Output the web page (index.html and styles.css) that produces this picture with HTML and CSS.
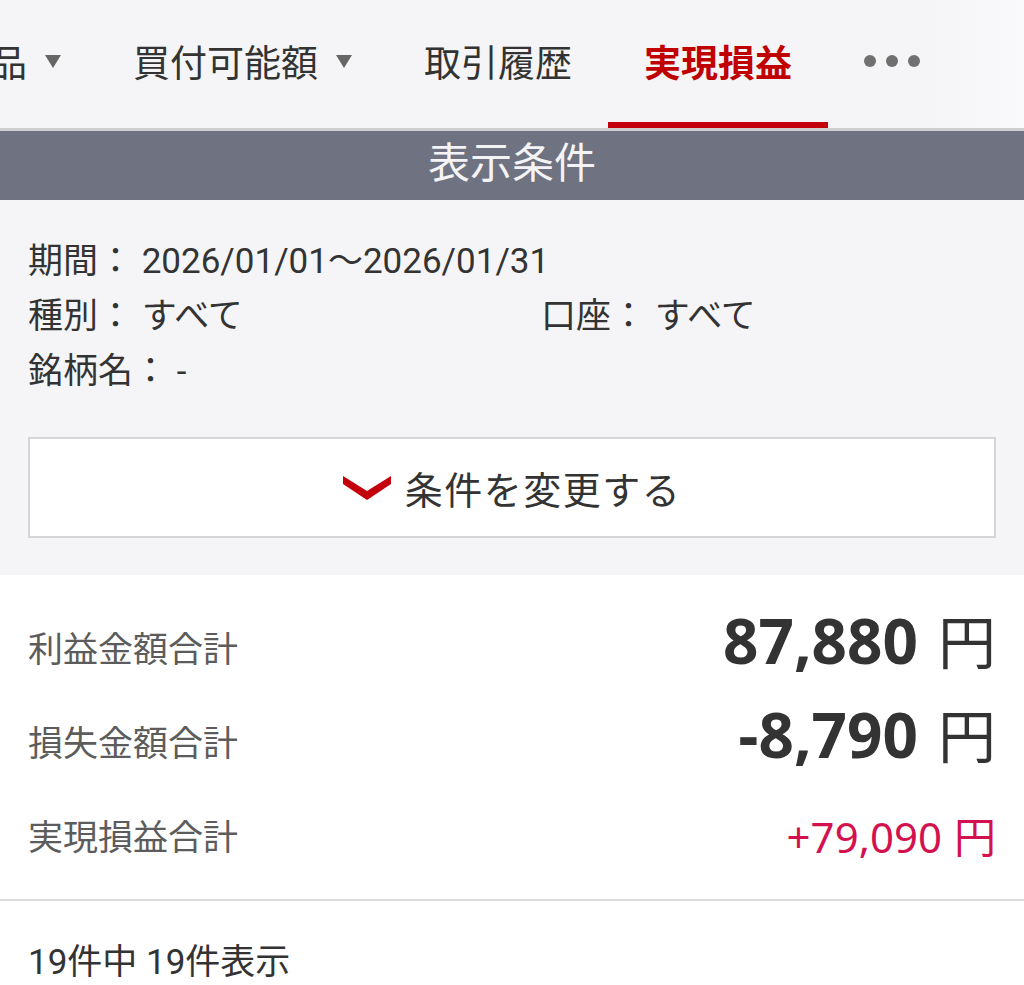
FILE: index.html
```html
<!DOCTYPE html>
<html lang="ja">
<head>
    <meta charset="UTF-8">
    <meta name="viewport" content="width=device-width, initial-scale=1.0">
    <title>実現損益</title>
    <link rel="stylesheet" href="styles.css">
</head>
<body>
    <!-- タブ -->
    <nav class="tabs">
        <div class="tab tab-first">品<span class="caret"></span></div>
        <div class="tab">買付可能額<span class="caret"></span></div>
        <div class="tab">取引履歴</div>
        <div class="tab active">実現損益</div>
        <div class="tab more"><span class="dot"></span><span class="dot"></span><span class="dot"></span></div>
        <div class="fade"></div>
    </nav>

    <div class="section-title">表示条件</div>

    <!-- 表示条件 -->
    <section class="conditions">
        <div class="cond-grid">
            <div class="cond full">期間： 2026/01/01～2026/01/31</div>
            <div class="cond">種別： すべて</div>
            <div class="cond">口座： すべて</div>
            <div class="cond full">銘柄名： -</div>
        </div>
        <button class="change-btn" type="button">
            <svg class="chevron" width="48" height="24" viewBox="0 0 48 24">
                <polygon points="0,0 24,15 48,0 48,8 24,24 0,8" fill="#c4000c"/>
            </svg>
            <span>条件を変更する</span>
        </button>
    </section>

    <!-- 合計 -->
    <section class="summary">
        <div class="sum-row">
            <span class="sum-label">利益金額合計</span>
            <span class="sum-value big">87,880<span class="yen">円</span></span>
        </div>
        <div class="sum-row">
            <span class="sum-label">損失金額合計</span>
            <span class="sum-value big">-8,790<span class="yen">円</span></span>
        </div>
        <div class="sum-row">
            <span class="sum-label">実現損益合計</span>
            <span class="sum-value plus">+79,090<span class="yen">円</span></span>
        </div>
    </section>

    <div class="count">19件中 19件表示</div>
</body>
</html>
```

FILE: styles.css
```css
body {
    margin: 0;
    width: 1024px;
    overflow: hidden;
    background: #ffffff;
    color: #333333;
    font-family: Roboto, "Noto Sans CJK JP", sans-serif;
}
.tabs {
    position: relative;
    display: flex;
    height: 128px;
    background: #f5f5f7;
    border-bottom: 3px solid #cfcfd3;
    overflow: hidden;
    white-space: nowrap;
}
.tab {
    box-sizing: border-box;
    height: 128px;
    display: flex;
    align-items: center;
    padding: 0 36px;
    border-bottom: 6px solid transparent;
    font-size: 37px;
    color: #333333;
    flex-shrink: 0;
}
.tab-first {
    margin-left: -46px;
}
.tab.active {
    color: #c00000;
    font-weight: bold;
    border-bottom-color: #c4000c;
}
.caret {
    width: 0;
    height: 0;
    margin-left: 18px;
    border-left: 8px solid transparent;
    border-right: 8px solid transparent;
    border-top: 13px solid #666666;
}
.more {
    gap: 10px;
}
.dot {
    width: 12px;
    height: 12px;
    border-radius: 50%;
    background: #707070;
}
.fade {
    position: absolute;
    right: 0;
    top: 0;
    width: 100px;
    height: 100%;
    background: linear-gradient(to right, rgba(248, 248, 250, 0), rgba(250, 250, 252, 0.9));
}
.section-title {
    height: 69px;
    line-height: 66px;
    background: #6f7280;
    color: #f4f4f6;
    text-align: center;
    font-size: 42px;
}
.conditions {
    background: #f5f5f7;
    padding: 34px 28px 37px;
}
.cond-grid {
    display: grid;
    grid-template-columns: 513px 1fr;
}
.cond {
    font-size: 35px;
    line-height: 55px;
}
.cond.full {
    grid-column: 1 / 3;
}
.change-btn {
    box-sizing: border-box;
    width: 100%;
    height: 101px;
    margin-top: 38px;
    display: flex;
    align-items: center;
    justify-content: center;
    gap: 14px;
    background: #ffffff;
    border: 2px solid #d6d6d9;
    font-family: Roboto, "Noto Sans CJK JP", sans-serif;
    font-size: 38px;
    color: #333333;
    cursor: pointer;
}
.change-btn span {
    letter-spacing: 1.5px;
}
.summary {
    padding: 24px 28px 18px;
    border-bottom: 2px solid #dcdcde;
}
.sum-row {
    height: 94px;
    display: flex;
    align-items: center;
    justify-content: space-between;
}
.sum-label {
    font-size: 35px;
    color: #5c5c5c;
}
.sum-value {
    font-family: "Noto Sans", "Noto Sans CJK JP", sans-serif;
    color: #333333;
}
.sum-value.big {
    font-size: 62px;
    font-weight: bold;
    margin-top: -14px;
}
.sum-value.big .yen {
    font-weight: normal;
    font-size: 58px;
    margin-left: 20px;
}
.sum-value.plus {
    font-size: 42px;
    color: #d4114f;
}
.sum-value.plus .yen {
    margin-left: 12px;
}
.count {
    padding: 37px 28px;
    font-size: 35px;
    line-height: 50px;
}
```
